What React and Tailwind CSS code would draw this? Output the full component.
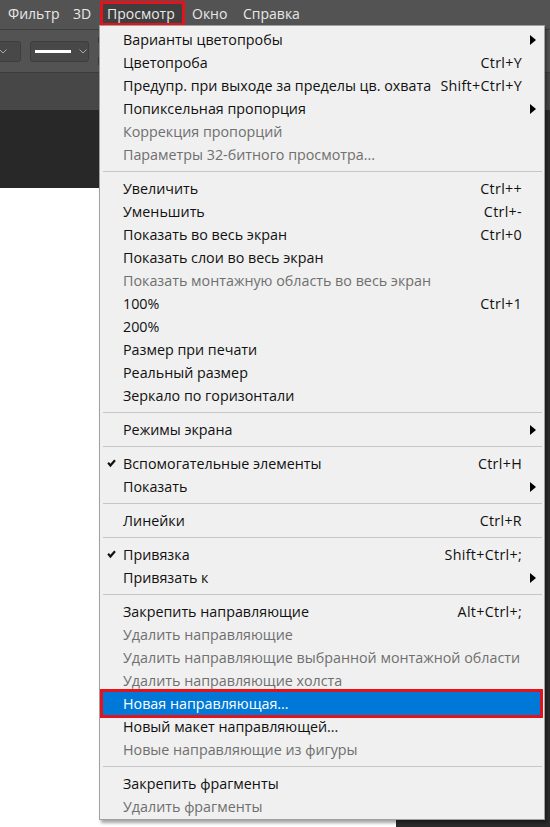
import React from 'react';

const FONT = { fontFamily: '"Open Sans", "Noto Sans", sans-serif' };

// menu bar: label + box width, left padding (px)
const MENU_BAR = [
  { label: 'Фильтр', w: 'w-[64px] pl-[7px]' },
  { label: '3D', w: 'w-[35px] pl-[8px]' },
  { label: 'Просмотр', w: 'w-[85px] pl-[4px]', open: true },
  { label: 'Окно', w: 'w-[51px] pl-[7px]' },
  { label: 'Справка', w: 'w-[70px] pl-[7px]' },
];

// menu structure: arrays are groups, separated by a rule
const GROUPS = [
  [
    { label: 'Варианты цветопробы', sub: true },
    { label: 'Цветопроба', shortcut: 'Ctrl+Y' },
    { label: 'Предупр. при выходе за пределы цв. охвата', shortcut: 'Shift+Ctrl+Y' },
    { label: 'Попиксельная пропорция', sub: true },
    { label: 'Коррекция пропорций', disabled: true },
    { label: 'Параметры 32-битного просмотра...', disabled: true },
  ],
  [
    { label: 'Увеличить', shortcut: 'Ctrl++' },
    { label: 'Уменьшить', shortcut: 'Ctrl+-' },
    { label: 'Показать во весь экран', shortcut: 'Ctrl+0' },
    { label: 'Показать слои во весь экран' },
    { label: 'Показать монтажную область во весь экран', disabled: true },
    { label: '100%', shortcut: 'Ctrl+1' },
    { label: '200%' },
    { label: 'Размер при печати' },
    { label: 'Реальный размер' },
    { label: 'Зеркало по горизонтали' },
  ],
  [{ label: 'Режимы экрана', sub: true }],
  [
    { label: 'Вспомогательные элементы', shortcut: 'Ctrl+H', checked: true },
    { label: 'Показать', sub: true },
  ],
  [{ label: 'Линейки', shortcut: 'Ctrl+R' }],
  [
    { label: 'Привязка', shortcut: 'Shift+Ctrl+;', checked: true },
    { label: 'Привязать к', sub: true },
  ],
  [
    { label: 'Закрепить направляющие', shortcut: 'Alt+Ctrl+;' },
    { label: 'Удалить направляющие', disabled: true },
    { label: 'Удалить направляющие выбранной монтажной области', disabled: true },
    { label: 'Удалить направляющие холста', disabled: true },
    { label: 'Новая направляющая...', active: true },
    { label: 'Новый макет направляющей...' },
    { label: 'Новые направляющие из фигуры', disabled: true },
  ],
  [
    { label: 'Закрепить фрагменты' },
    { label: 'Удалить фрагменты', disabled: true },
  ],
];

const Check = () => (
  <svg width="9" height="9" viewBox="0 0 9 9">
    <path d="M0.3 4.6 L1.9 3.1 L3.4 4.8 L7.2 0.6 L8.8 2.1 L3.4 8.2 Z" fill="#111" />
  </svg>
);

const Arrow = () => (
  <svg width="6" height="10" viewBox="0 0 6 10">
    <path d="M0 0 L6 5 L0 10 Z" fill="#000" />
  </svg>
);

const Item = ({ label, shortcut, sub, checked, disabled, active }) => {
  const color = active ? 'text-white' : disabled ? 'text-[#6f6f6f]' : 'text-[#111]';
  return (
    <div
      className={`flex h-[23px] items-center ${color} ${
        active ? 'ml-[3px] mr-[4px] bg-[#0078d7] ring-[3px] ring-[#e3121b]' : ''
      }`}
    >
      <div className={`flex shrink-0 items-center ${active ? 'w-[20px] pl-[4px]' : 'w-[23px] pl-[7px]'}`}>
        {checked && <Check />}
      </div>
      <span className="flex-1 whitespace-nowrap">{label}</span>
      {shortcut && <span className="whitespace-nowrap tracking-[0.3px]">{shortcut}</span>}
      <div className={`flex shrink-0 items-center ${active ? 'w-[18px] pl-[8px]' : 'w-[22px] pl-[8px]'}`}>
        {sub && <Arrow />}
      </div>
    </div>
  );
};

const Separator = () => (
  <div className="flex h-[11px] items-center pl-[3px] pr-[2px]">
    <div className="h-px w-full bg-[#c6c6c6]" />
  </div>
);

const Dropdown = ({ className, children }) => (
  <div
    className={`flex h-[21px] items-center rounded-[3px] border border-[#3d3d3d] bg-[#484848] ${className}`}
  >
    {children}
  </div>
);

const Chevron = () => (
  <svg width="8" height="5" viewBox="0 0 8 5">
    <path d="M0.5 0.5 L4 4 L7.5 0.5" stroke="#a8a8a8" strokeWidth="1" fill="none" />
  </svg>
);

export default function App() {
  return (
    <div className="relative flex h-[827px] w-[550px] flex-col overflow-hidden bg-[#282828] text-[14.3px]" style={FONT}>
      {/* Menu bar */}
      <div className="flex h-[30px] shrink-0 items-start border-b border-[#3e3e3e] bg-[#535353] pl-[1px] text-[14px] text-[#e8e8e8]">
        {MENU_BAR.map((m) => (
          <div
            key={m.label}
            className={`mt-px flex h-[25px] shrink-0 items-center whitespace-nowrap ${m.w} ${
              m.open ? 'border-[3px] border-[#e3121b] bg-[#3f3f3f]' : ''
            }`}
          >
            {m.label}
          </div>
        ))}
      </div>

      {/* Options bar */}
      <div className="flex h-[43px] shrink-0 items-center gap-[9px] border-b border-[#3c3c3c] bg-[#535353]">
        <Dropdown className="-ml-[10px] w-[31px]">
          <div className="h-full w-[4px] border-r border-[#3d3d3d]" />
          <div className="ml-[4px]">
            <Chevron />
          </div>
        </Dropdown>
        <Dropdown className="w-[59px] pl-[4px]">
          <div className="h-[3px] w-[36px] bg-white" />
          <div className="ml-[8px]">
            <Chevron />
          </div>
        </Dropdown>
        <div className="flex h-[28px] flex-col justify-between">
          <div className="h-[6px] w-px bg-[#3a3a3a]" />
          <div className="h-[8px] w-px bg-[#3a3a3a]" />
        </div>
      </div>

      {/* Panel strip */}
      <div className="h-[37px] shrink-0 bg-[#474747]" />

      {/* Workspace */}
      <div className="flex flex-1">
        <div className="flex w-[396px] flex-col">
          <div className="h-[78px] bg-[#282828]" />
          <div className="flex-1 bg-white" />
        </div>
        <div className="flex-1 bg-[#2b2b2b]" />
      </div>

      {/* View menu */}
      <div className="absolute left-[99px] top-[25px] w-[446px] border border-[#a0a0a0] bg-[#f0f0f0] pb-[1px] pt-[2px] shadow-[2px_3px_3px_rgba(0,0,0,0.35)]">
        {GROUPS.map((group, gi) => (
          <React.Fragment key={gi}>
            {gi > 0 && <Separator />}
            {group.map((it) => (
              <Item key={it.label} {...it} />
            ))}
          </React.Fragment>
        ))}
      </div>
    </div>
  );
}
